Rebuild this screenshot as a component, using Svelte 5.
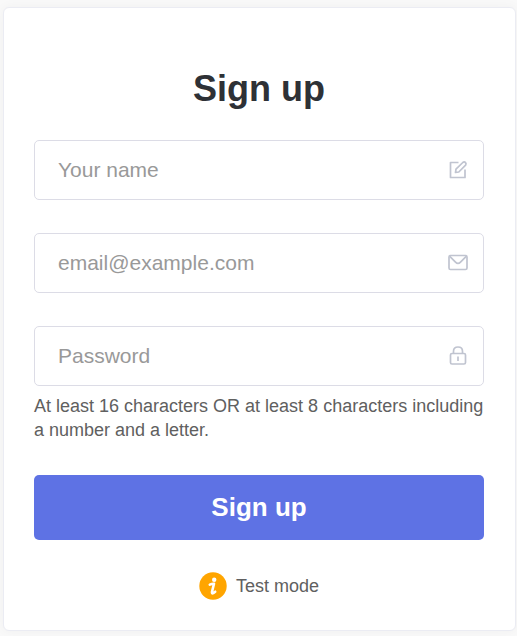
<script>
  let name = $state('');
  let email = $state('');
  let password = $state('');

  function submit(event) {
    event.preventDefault();
  }
</script>

<main>
  <form class="card" onsubmit={submit}>
    <h1>Sign up</h1>

    <div class="field">
      <input type="text" placeholder="Your name" aria-label="Your name" bind:value={name} />
      <svg class="icon" viewBox="0 0 20 20" aria-hidden="true">
        <path d="M10.500 2.500H2.500V17.500H17V9.500" />
        <path d="M7.500 12.500L8 9.200L14.800 2.500Q16.200 1.400 17.400 2.500T17.600 5.200L10.800 12Z" />
      </svg>
    </div>

    <div class="field">
      <input type="email" placeholder="email@example.com" aria-label="Email" bind:value={email} />
      <svg class="icon" viewBox="0 0 20 20" aria-hidden="true">
        <rect x="1" y="2.500" width="18" height="14" rx="1.500" />
        <path d="M1.800 3.300L7.500 9.200Q10 11.700 12.500 9.200L18.200 3.300" />
      </svg>
    </div>

    <div class="field last">
      <input type="password" placeholder="Password" aria-label="Password" aria-describedby="hint" bind:value={password} />
      <svg class="icon" viewBox="0 0 20 20" aria-hidden="true">
        <rect x="2.500" y="7.500" width="15" height="10.500" rx="1.500" />
        <path d="M5.500 7.500V5.200Q5.500 1 10 1T14.500 5.200V7.500M10 10.500V15" />
      </svg>
    </div>

    <p id="hint">At least 16 characters OR at least 8 characters including a number and a letter.</p>

    <button type="submit">Sign up</button>

    <div class="mode">
      <svg class="info" viewBox="0 0 28 28" aria-hidden="true">
        <circle cx="14" cy="14" r="13.700" fill="#ffa500" />
        <circle cx="15.200" cy="7.700" r="2.200" fill="#fff" />
        <path d="M10.800 12.600Q13 11.600 15 11.700L13 19.700Q12.700 22 14.200 21.200L16.200 19.700" fill="none" stroke="#fff" stroke-width="2.600" stroke-linejoin="round" stroke-linecap="round" />
      </svg>
      <span>Test mode</span>
    </div>
  </form>
</main>

<style>
  :global(body) {
    margin: 0;
    background: #f9f9f9;
  }

  main {
    padding: 7px 1px 5px 3px;
    background: #f9f9f9;
    font-family: 'Liberation Sans', Arial, sans-serif;
    color: #606060;
  }

  .card {
    box-sizing: border-box;
    padding: 61px 31px 30px 30px;
    border: 1px solid #ebecf3;
    border-radius: 6px;
    background: #fff;
    box-shadow: 0 0 12px rgba(0, 0, 0, 0.04);
  }

  h1 {
    margin: 0 0 31px;
    font-size: 36px;
    line-height: 40px;
    text-align: center;
    color: #2e3136;
  }

  .field {
    position: relative;
    margin-bottom: 33px;
  }

  .field.last {
    margin-bottom: 8px;
  }

  input {
    display: block;
    box-sizing: border-box;
    width: 100%;
    height: 60px;
    padding: 0 56px 0 23px;
    border: 1px solid #dcdce6;
    border-radius: 5px;
    background: #fff;
    font: 21px 'Liberation Sans', Arial, sans-serif;
    color: #2e3136;
  }

  input::placeholder {
    color: #999;
    opacity: 1;
  }

  .icon {
    position: absolute;
    top: 20px;
    right: 16px;
    width: 20px;
    height: 20px;
    fill: none;
    stroke: #c0c4d0;
    stroke-width: 1.700;
    stroke-linejoin: round;
    pointer-events: none;
  }

  p {
    margin: 0 0 33px;
    font-size: 18px;
    line-height: 24px;
  }

  button {
    display: block;
    width: 100%;
    height: 65px;
    padding: 0;
    border: 0;
    border-radius: 5px;
    background: #5e72e4;
    font: bold 26px 'Liberation Sans', Arial, sans-serif;
    color: #fff;
    cursor: pointer;
  }

  .mode {
    display: flex;
    align-items: center;
    justify-content: center;
    gap: 9px;
    margin-top: 32px;
    font-size: 18px;
    line-height: 28px;
  }

  .info {
    width: 28px;
    height: 28px;
  }
</style>
